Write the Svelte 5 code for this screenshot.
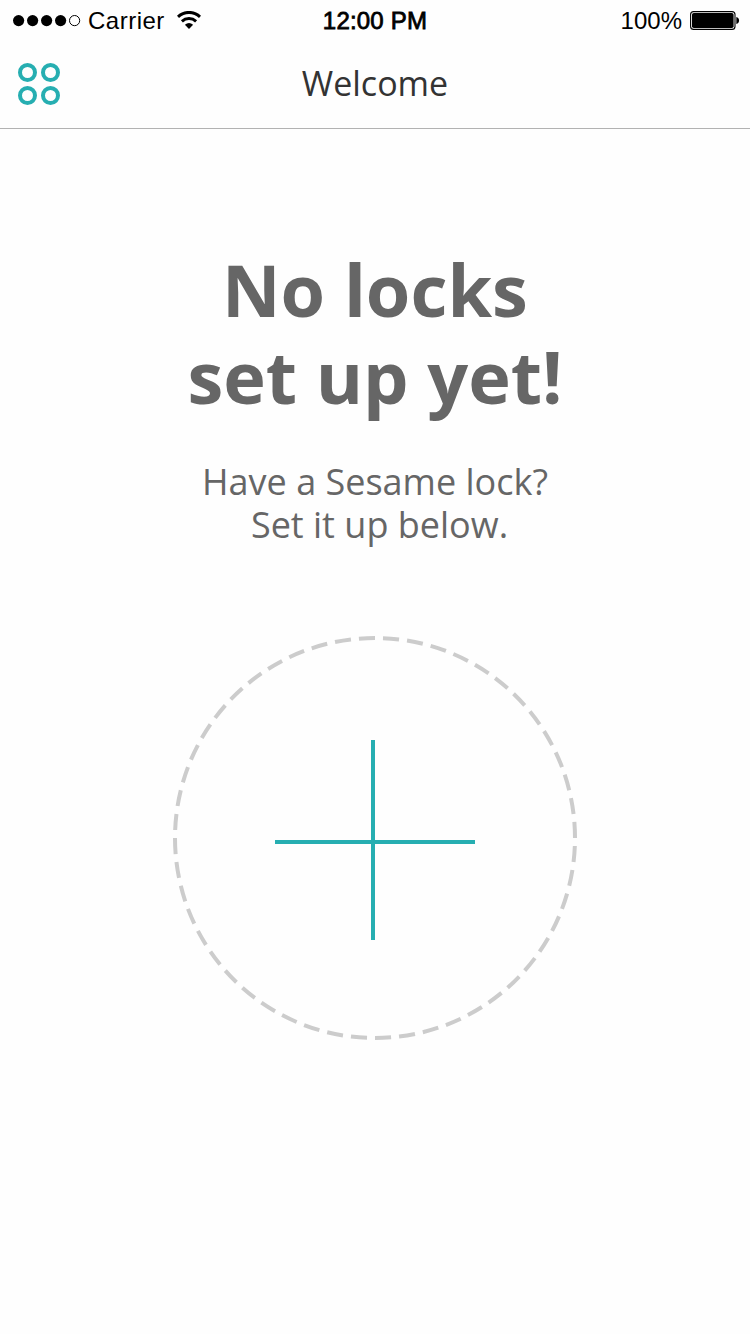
<script>
  const dots = [0, 1, 2, 3];
</script>

<div class="screen">
  <div class="status">
    <div class="left">
      <svg class="signal" width="68" height="12" viewBox="0 0 68 12">
        {#each dots as i}
          <circle cx={5.6 + i * 14} cy="5.6" r="5.6" fill="#000" />
        {/each}
        <circle cx="61.6" cy="5.6" r="5.1" fill="none" stroke="#000" stroke-width="1" />
      </svg>
      <span class="carrier">Carrier</span>
      <svg class="wifi" width="24" height="20" viewBox="0 0 24 20">
        <g fill="none" stroke="#000" stroke-width="3">
          <path d="M1 5.8 A16 16 0 0 1 23 5.8" />
          <path d="M4.9 10.3 A10.6 10.6 0 0 1 19.1 10.3" />
        </g>
        <path d="M7.9 13.8 A6.3 6.3 0 0 1 16.1 13.8 L12 18 Z" fill="#000" />
      </svg>
    </div>
    <span class="time">12:00 PM</span>
    <div class="right">
      <span class="percent">100%</span>
      <svg width="50" height="20" viewBox="0 0 50 20">
        <rect x="0.6" y="0.6" width="44.4" height="17.8" rx="3" fill="none" stroke="#000" stroke-width="1.1" />
        <rect x="2" y="2" width="41.6" height="15" rx="1.8" fill="#000" />
        <path d="M46.3 6 C50 6.6 50 12.4 46.3 13 Z" fill="#000" />
      </svg>
    </div>
  </div>

  <header>
    <svg class="menu" width="42" height="42" viewBox="0 0 42 42" fill="none" stroke="#26aeb1" stroke-width="4">
      <circle cx="9.5" cy="9.5" r="7.5" />
      <circle cx="32.5" cy="9.5" r="7.5" />
      <circle cx="9.5" cy="32.5" r="7.5" />
      <circle cx="32.5" cy="32.5" r="7.5" />
    </svg>
    <span class="title">Welcome</span>
    <span></span>
  </header>

  <main>
    <h1>No locks<br />set up yet!</h1>
    <p>Have a Sesame lock?<br /><span class="second">Set it up below.</span></p>
    <svg class="add" width="404" height="404" viewBox="0 0 404 404" fill="none" stroke-width="4">
      <circle cx="202" cy="202" r="200" stroke="#ccc" pathLength="1248" stroke-dasharray="16 8" transform="matrix(1 0 0 -1 0 404)" />
      <path d="M200 104V304M102 206H302" stroke="#26aeb1" />
    </svg>
  </main>
</div>

<style>
  :global(body) {
    margin: 0;
    background: #fefefe;
  }
  .screen {
    width: 750px;
    height: 1334px;
    overflow: hidden;
    background: #fefefe;
    font-family: "Open Sans", sans-serif;
  }
  .status {
    display: grid;
    grid-template-columns: 1fr auto 1fr;
    align-items: center;
    box-sizing: border-box;
    height: 40px;
    padding: 2px 10px 0 13px;
    font: 24px/38px "Liberation Sans", sans-serif;
    color: #000;
  }
  .left,
  .right {
    display: flex;
    align-items: center;
  }
  .right {
    justify-content: flex-end;
    gap: 8px;
  }
  .carrier {
    margin-left: 7px;
    letter-spacing: 0.5px;
  }
  .wifi {
    margin-left: 12px;
  }
  .time {
    margin-right: 3px;
    letter-spacing: 0.2px;
    -webkit-text-stroke: 0.8px #000;
  }
  header {
    display: grid;
    grid-template-columns: 1fr auto 1fr;
    align-items: center;
    box-sizing: border-box;
    height: 89px;
    padding: 0 18px;
    border-bottom: 1px solid #b2b2b2;
  }
  .title {
    padding-bottom: 2px;
    font-size: 34px;
    line-height: 46px;
    color: #333;
  }
  main {
    display: flex;
    flex-direction: column;
    align-items: center;
    padding-top: 117px;
    color: #666;
    text-align: center;
  }
  h1 {
    margin: 0;
    font-size: 72px;
    line-height: 87px;
    font-weight: 700;
  }
  p {
    margin: 40px 0 0;
    font-size: 36px;
    line-height: 43px;
  }
  .second {
    padding-left: 9px;
  }
  .add {
    margin-top: 90px;
  }
</style>
